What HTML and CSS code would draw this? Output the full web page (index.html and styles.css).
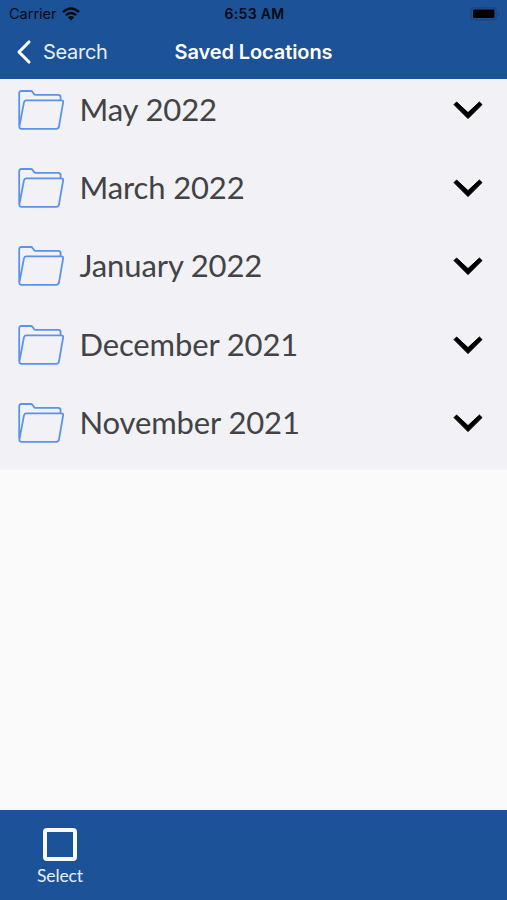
FILE: index.html
```html
<!DOCTYPE html>
<html lang="en">
<head>
<meta charset="utf-8">
<title>Saved Locations</title>
<link rel="stylesheet" href="styles.css">
</head>
<body>
<svg class="defs" aria-hidden="true">
  <symbol id="folder" viewBox="0 0 48 42">
    <path d="M2.2 37V4.2Q2.2 2 4.4 2H13.8Q15 2 15.6 3L17 5Q17.5 5.8 18.6 5.8H41.3Q43.6 5.8 43.6 8.2V11M7 13.2Q7.5 11.4 9.5 11.4H44.2Q46.6 11.4 46.1 13.6L42 37.4Q41.6 39.8 39.2 39.8H4.6Q2 39.8 2.4 37.4Z" fill="none" stroke="#5b92eb" stroke-width="1.8" stroke-linejoin="round"/>
  </symbol>
  <symbol id="chevron" viewBox="0 0 32 22">
    <path d="M2 5.6L4.6 3L16 13.6L27.4 3L30 5.6L16 19.6Z" fill="#000" stroke="#000" stroke-width="1" stroke-linejoin="round"/>
  </symbol>
</svg>
<div class="app">
  <header class="header">
    <div class="status">
      <div class="carrier"><span>Carrier</span>
        <svg class="wifi" viewBox="0 0 18 14"><path d="M1 5.2Q9 -2 17 5.2M3.8 8.2Q9 3.6 14.2 8.2" fill="none" stroke="#020a14" stroke-width="2.4"/><path d="M5.8 10.3Q9 7.6 12.2 10.3L9 13.5Z" fill="#020a14"/></svg>
      </div>
      <div class="time">6:53 AM</div>
      <svg class="battery" viewBox="0 0 30 14"><rect x=".8" y=".8" width="25.4" height="12" rx="3" fill="none" stroke="#174580" stroke-width="1.2"/><rect x="3" y="2.6" width="21.5" height="8.4" rx="1.3" fill="#000"/><path d="M28 5V9Q29.4 8.4 29.4 7T28 5" fill="#174580"/></svg>
    </div>
    <nav class="nav">
      <div class="back">
        <svg class="arrow" viewBox="0 0 16 26"><path d="M13 3L3 13L13 23" fill="none" stroke="#fff" stroke-width="3.1" stroke-linecap="round" stroke-linejoin="round"/></svg>
        <span class="back-text">Search</span>
      </div>
      <h1 class="title">Saved Locations</h1>
    </nav>
  </header>
  <ul class="list">
    <li class="row"><svg class="folder"><use href="#folder"/></svg><span class="label">May 2022</span><svg class="chevron"><use href="#chevron"/></svg></li>
    <li class="row"><svg class="folder"><use href="#folder"/></svg><span class="label">March 2022</span><svg class="chevron"><use href="#chevron"/></svg></li>
    <li class="row"><svg class="folder"><use href="#folder"/></svg><span class="label">January 2022</span><svg class="chevron"><use href="#chevron"/></svg></li>
    <li class="row"><svg class="folder"><use href="#folder"/></svg><span class="label">December 2021</span><svg class="chevron"><use href="#chevron"/></svg></li>
    <li class="row"><svg class="folder"><use href="#folder"/></svg><span class="label">November 2021</span><svg class="chevron"><use href="#chevron"/></svg></li>
  </ul>
  <footer class="toolbar">
    <div class="select"><span class="box"></span><span class="caption">Select</span></div>
  </footer>
</div>
</body>
</html>
```
FILE: styles.css
```css
* { box-sizing: border-box; }
body { margin: 0; background: #fafafa; font-family: Inter, "Liberation Sans", sans-serif; }
.defs { display: none; }
.app { display: flex; flex-direction: column; height: 900px; }
.header { height: 79px; background: #1c5297; }
.status {
  display: grid; grid-template-columns: 1fr auto 1fr; align-items: center;
  height: 27px; padding: 0 7px 0 9px; color: #020a14; font-size: 14.5px; line-height: 27px;
}
.carrier { display: flex; align-items: center; gap: 5px; }
.wifi { width: 18px; height: 14px; }
.time { font-weight: 600; font-size: 14px; letter-spacing: .35px; }
.battery { justify-self: end; width: 30px; height: 14px; }
.nav {
  display: grid; grid-template-columns: 1fr auto 1fr; align-items: center;
  height: 52px; padding: 0 16px 2px; color: #fff; font-size: 20px;
}
.back { display: flex; align-items: center; gap: 11px; color: #e6effb; }
.back-text { letter-spacing: -.3px; }
.arrow { width: 16px; height: 26px; }
.title { margin: 0; font-size: 20px; font-weight: 600; letter-spacing: -.1px; }
.list { margin: 0; padding: 0; list-style: none; height: 391px; background: #f1f1f6; }
.row { display: flex; align-items: center; height: 78.2px; padding: 0 23px 16px 17px; }
.folder { width: 48px; height: 42px; }
.label { flex: 1; margin-left: 14.5px; padding-bottom: 1px; color: #434345; font: 31px/39px Lato, sans-serif; letter-spacing: -.13px; }
.chevron { width: 32px; height: 22px; }
.toolbar { margin-top: auto; height: 90px; background: #1c5297; }
.select { display: flex; flex-direction: column; align-items: center; width: 120px; padding-top: 18px; }
.box { width: 34px; height: 33px; border: 4px solid #f7f9ff; border-radius: 4px; }
.caption { margin-top: 4px; color: #e6effb; font: 17.5px/22px Lato, sans-serif; letter-spacing: -.1px; }
```
